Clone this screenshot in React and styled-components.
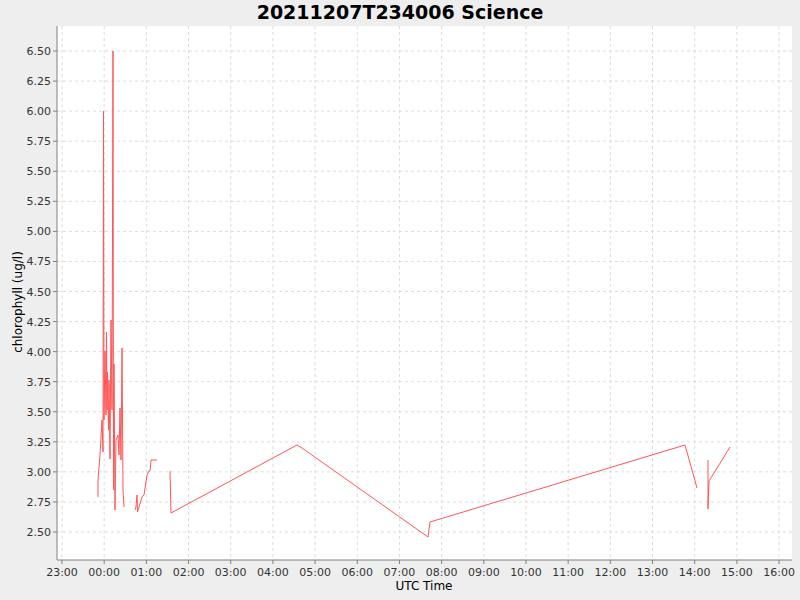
import React from 'react';
import styled, { createGlobalStyle } from 'styled-components';

const Global = createGlobalStyle`
  body { margin: 0; background: #eeeeee; font-family: "DejaVu Sans", sans-serif; }
`;

const Frame = styled.div`
  width: 800px;
  height: 600px;
  background: #eeeeee;
  display: flex;
  flex-direction: column;
`;

const Title = styled.div`
  height: 25px;
  line-height: 25px;
  text-align: center;
  font-weight: bold;
  font-size: 19px;
  color: #000;
`;

const Chart = styled.svg`
  display: block;
  font-family: "DejaVu Sans", sans-serif;
`;

const L = 57, R = 792, T = 26, B = 560;
const xAt = (h) => 62 + h * 42.18;
const yAt = (v) => 532 - (v - 2.5) * 120.25;
const yTicks = Array.from({ length: 17 }, (_, i) => 2.5 + i * 0.25);
const xLabels = ['23:00', '00:00', '01:00', '02:00', '03:00', '04:00', '05:00', '06:00', '07:00', '08:00', '09:00', '10:00', '11:00', '12:00', '13:00', '14:00', '15:00', '16:00'];

const series = [
  [[98, 497], [98, 480], [100, 455], [102, 420], [103, 452], [103.5, 111], [104, 420], [105, 351], [106, 415], [106.5, 332], [107, 410], [107.5, 372], [108.5, 430], [109, 380], [110, 459], [111, 320], [112, 410], [113, 51], [113.5, 490], [114, 364], [115, 510], [116, 440], [118, 435], [119, 455], [120, 408], [121, 460], [122, 348], [123, 490], [124, 507]],
  [[135, 510], [136, 507], [137, 495], [137.5, 512], [142, 497], [144, 495], [147, 475], [149, 471], [150, 471], [151, 460], [157, 460]],
  [[170, 471], [171, 513], [297, 445], [302, 448], [428, 537], [430, 522], [685, 445], [697, 488]],
  [[708, 460], [708, 509], [709, 481], [730, 447]],
];

const App = () => (
  <Frame>
    <Global />
    <Title>20211207T234006 Science</Title>
    <Chart width="800" height="575" viewBox="0 25 800 575">
      <rect x={L} y={T} width={R - L} height={B - T} fill="#fff" />
      {yTicks.map((v) => (
        <g key={v}>
          <line x1={L} x2={R} y1={yAt(v)} y2={yAt(v)} stroke="#dcdcdc" strokeDasharray="3 3" />
          <line x1={L - 4} x2={L} y1={yAt(v)} y2={yAt(v)} stroke="#808080" />
          <text x={L - 6} y={yAt(v) + 4} fontSize="11" textAnchor="end" fill="#333">{v.toFixed(2)}</text>
        </g>
      ))}
      {xLabels.map((s, i) => (
        <g key={s}>
          <line x1={xAt(i)} x2={xAt(i)} y1={T} y2={B} stroke="#dcdcdc" strokeDasharray="3 3" />
          <line x1={xAt(i)} x2={xAt(i)} y1={B} y2={B + 4} stroke="#808080" />
          <text x={xAt(i)} y={B + 16} fontSize="11" textAnchor="middle" fill="#333">{s}</text>
        </g>
      ))}
      <line x1={L} x2={L} y1={T} y2={B} stroke="#808080" />
      <line x1={L} x2={R} y1={B} y2={B} stroke="#808080" />
      {series.map((pts, i) => (
        <polyline key={i} points={pts.map((p) => p.join(',')).join(' ')} fill="none" stroke="#ff5555" strokeWidth="1" />
      ))}
      <text x={424} y={590} fontSize="12" textAnchor="middle" fill="#000">UTC Time</text>
      <text transform="translate(22 302) rotate(-90)" fontSize="12" textAnchor="middle" fill="#000">chlorophyll (ug/l)</text>
    </Chart>
  </Frame>
);

export default App;
